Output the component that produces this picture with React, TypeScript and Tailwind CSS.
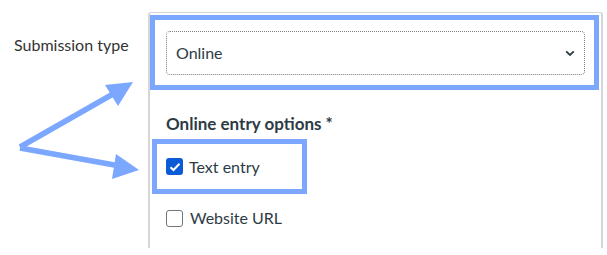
import React from "react";

export default function App() {
  const blue = "#7BA7FF";
  return (
    <div className="relative w-[607px] h-[255px] overflow-hidden bg-white text-[#2D3B45]" style={{ fontFamily: "Lato, 'Open Sans', sans-serif" }}>
      <div className="flex">
        <div className="w-[148px] pl-[14px] pt-[35px] text-[16px] leading-[20px] text-[#333]">Submission type</div>
        <div className="w-[455px] h-[236px] mt-[12px] border-l-2 border-r-2 border-t border-[#d6d6d6] rounded-tl-[3px] rounded-tr-[3px] pt-[2px]">
          <div className="border-[5px] border-[#7BA7FF] mr-[2px] pl-[11px] pr-[9px] pt-[11px] pb-[10px]">
            <div className="h-[44px] border border-dotted border-[#7a7f85] rounded-[4px] flex items-center justify-between pl-[9px] pr-[9px] text-[16px]">
              <span>Online</span>
              <svg width="10" height="7" viewBox="0 0 10 7">
                <path d="M1.2 1.3 L5 5 L8.8 1.3" fill="none" stroke="#2D3B45" strokeWidth="1.8" />
              </svg>
            </div>
          </div>
          <div className="mt-[24px] pl-[16px] text-[17px] leading-[20px] font-bold">Online entry options *</div>
          <div className="mt-[5px] ml-[2px] w-[155px] h-[55px] border-[5px] border-[#7BA7FF] flex items-center pl-[9px]">
            <span className="w-[17px] h-[17px] rounded-[3px] bg-[#0B5BD7] flex items-center justify-center">
              <svg width="12" height="10" viewBox="0 0 12 10">
                <path d="M1.5 5.2 L4.5 8 L10.5 1.8" fill="none" stroke="white" strokeWidth="2" />
              </svg>
            </span>
            <span className="ml-[6px] text-[16px] leading-[20px]">Text entry</span>
          </div>
          <div className="mt-[14px] flex items-center pl-[16px]">
            <span className="w-[17px] h-[17px] rounded-[3px] border border-[#71767c] bg-white"></span>
            <span className="ml-[7px] text-[16px] leading-[20px]">Website URL</span>
          </div>
        </div>
      </div>
      <svg className="absolute left-0 top-0" width="150" height="200" viewBox="0 0 150 200">
        <path d="M20 147 L113 94" stroke={blue} strokeWidth="5.5" fill="none" />
        <polygon points="133,82 105,85 118,106" fill={blue} />
        <path d="M20 148 L120 166" stroke={blue} strokeWidth="5.5" fill="none" />
        <polygon points="139,170 116,154 112,179" fill={blue} />
      </svg>
    </div>
  );
}
